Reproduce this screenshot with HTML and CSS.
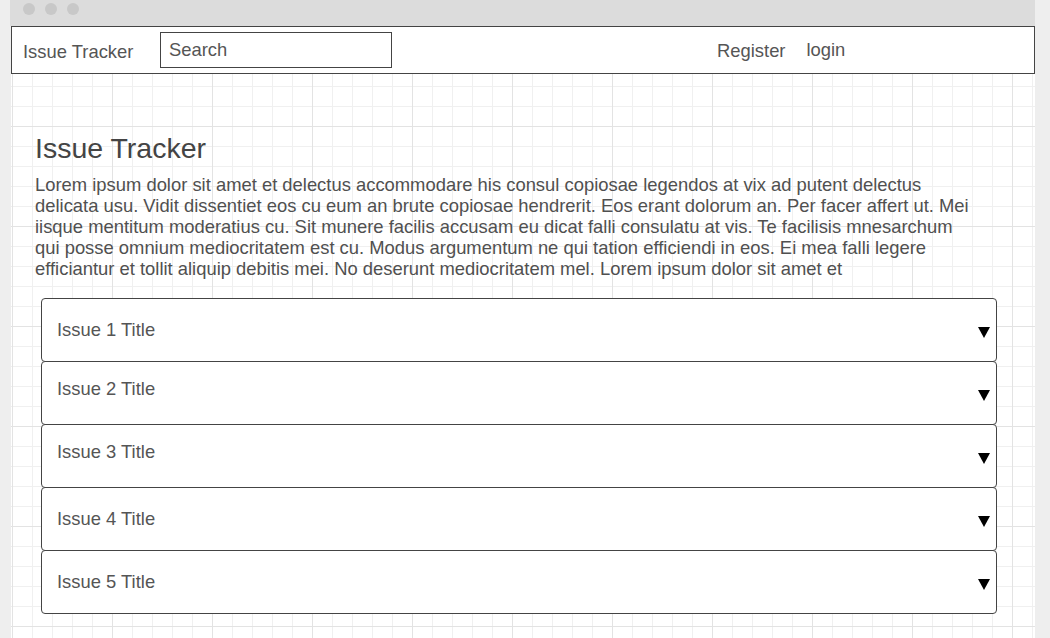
FILE: index.html
```html
<!DOCTYPE html>
<html lang="en">
<head>
<meta charset="utf-8">
<title>Issue Tracker</title>
<link rel="stylesheet" href="styles.css">
</head>
<body>
<div class="window">
  <div class="titlebar">
    <span class="dot"></span><span class="dot"></span><span class="dot"></span>
  </div>
  <div class="page">
    <nav class="nav">
      <span class="brand">Issue Tracker</span>
      <input class="search" type="text" placeholder="Search">
      <div class="links">
        <a class="link link-register" href="#">Register</a>
        <a class="link link-login" href="#">login</a>
      </div>
    </nav>
    <main class="main">
      <h1 class="heading">Issue Tracker</h1>
      <p class="intro">Lorem ipsum dolor sit amet et delectus accommodare his consul copiosae legendos at vix ad putent delectus delicata usu. Vidit dissentiet eos cu eum an brute copiosae hendrerit. Eos erant dolorum an. Per facer affert ut. Mei iisque mentitum moderatius cu. Sit munere facilis accusam eu dicat falli consulatu at vis. Te facilisis mnesarchum qui posse omnium mediocritatem est cu. Modus argumentum ne qui tation efficiendi in eos. Ei mea falli legere efficiantur et tollit aliquip debitis mei. No deserunt mediocritatem mel. Lorem ipsum dolor sit amet et</p>
      <div class="issues">
        <div class="issue"><span class="issue-title">Issue 1 Title</span><svg class="arrow" width="12" height="11" viewBox="0 0 12 11"><polygon points="0,0 12,0 6,11" fill="#000"/></svg></div>
        <div class="issue issue-tight"><span class="issue-title">Issue 2 Title</span><svg class="arrow" width="12" height="11" viewBox="0 0 12 11"><polygon points="0,0 12,0 6,11" fill="#000"/></svg></div>
        <div class="issue issue-tight"><span class="issue-title">Issue 3 Title</span><svg class="arrow" width="12" height="11" viewBox="0 0 12 11"><polygon points="0,0 12,0 6,11" fill="#000"/></svg></div>
        <div class="issue"><span class="issue-title">Issue 4 Title</span><svg class="arrow" width="12" height="11" viewBox="0 0 12 11"><polygon points="0,0 12,0 6,11" fill="#000"/></svg></div>
        <div class="issue"><span class="issue-title">Issue 5 Title</span><svg class="arrow" width="12" height="11" viewBox="0 0 12 11"><polygon points="0,0 12,0 6,11" fill="#000"/></svg></div>
      </div>
    </main>
  </div>
</div>
</body>
</html>
```

FILE: styles.css
```css
html, body {
  margin: 0;
  padding: 0;
  height: 100%;
  overflow: hidden;
}
body {
  background: #eeeeee;
  font-family: "Liberation Sans", Arial, sans-serif;
  color: #4a4a4a;
}
.window {
  margin-left: 10px;
  width: 1025px;
  height: 638px;
  display: flex;
  flex-direction: column;
}
.titlebar {
  height: 26px;
  flex: none;
  background: #dcdcdc;
  display: flex;
  align-items: flex-start;
  gap: 10px;
  padding: 3px 0 0 13px;
  box-sizing: border-box;
}
.dot {
  width: 12px;
  height: 12px;
  border-radius: 50%;
  background: #c8c8c8;
}
.page {
  flex: 1;
  margin-left: 1px;
  background-color: #ffffff;
  background-image:
    linear-gradient(to right, #e3e3e3 1px, transparent 1px),
    linear-gradient(to bottom, #e3e3e3 1px, transparent 1px),
    linear-gradient(to right, #f0f0f0 1px, transparent 1px),
    linear-gradient(to bottom, #f0f0f0 1px, transparent 1px);
  background-size: 100px 100px, 100px 100px, 20px 20px, 20px 20px;
  background-position: 1px 0, 0 0, 1px 0, 0 0;
}
.nav {
  height: 48px;
  box-sizing: border-box;
  border: 1px solid #444444;
  background: #ffffff;
  display: flex;
  align-items: flex-start;
  color: #555555;
  font-size: 18.4px;
  line-height: 21px;
}
.brand {
  width: 138px;
  padding-left: 11px;
  margin-top: 14px;
  flex: none;
}
.search {
  width: 232px;
  height: 36px;
  box-sizing: border-box;
  margin: 5px 0 0 -1px;
  border: 1px solid #444444;
  border-radius: 0;
  padding: 0 8px 0 8px;
  font-family: "Liberation Sans", Arial, sans-serif;
  font-size: 18.4px;
  color: #555555;
  background: #ffffff;
  outline: none;
}
.search::placeholder {
  color: #555555;
  opacity: 1;
}
.links {
  display: flex;
  align-items: flex-start;
  gap: 21px;
  margin-left: 325px;
}
.link {
  color: #555555;
  text-decoration: none;
}
.link-register {
  margin-top: 13px;
}
.link-login {
  margin-top: 12px;
}
.main {
  padding: 58px 0 0 24px;
}
.heading {
  margin: 0;
  font-size: 28.5px;
  line-height: 32px;
  font-weight: normal;
  color: #444444;
}
.intro {
  margin: 10px 0 0 0;
  width: 940px;
  font-size: 18.4px;
  line-height: 21px;
  color: #505050;
}
.issues {
  margin: 19px 0 0 6px;
  width: 956px;
  display: flex;
  flex-direction: column;
}
.issue {
  height: 64px;
  box-sizing: border-box;
  border: 1px solid #444444;
  border-radius: 4px;
  background: #ffffff;
  display: flex;
  align-items: flex-start;
  margin-top: -1px;
}
.issue:first-child {
  margin-top: 0;
}
.issue-title {
  flex: 1;
  padding: 20px 0 0 15px;
  font-size: 18.4px;
  line-height: 21px;
  color: #555555;
}
.issue-tight .issue-title {
  padding-top: 16px;
}
.arrow {
  flex: none;
  margin: 28px 6px 0 0;
}
```
